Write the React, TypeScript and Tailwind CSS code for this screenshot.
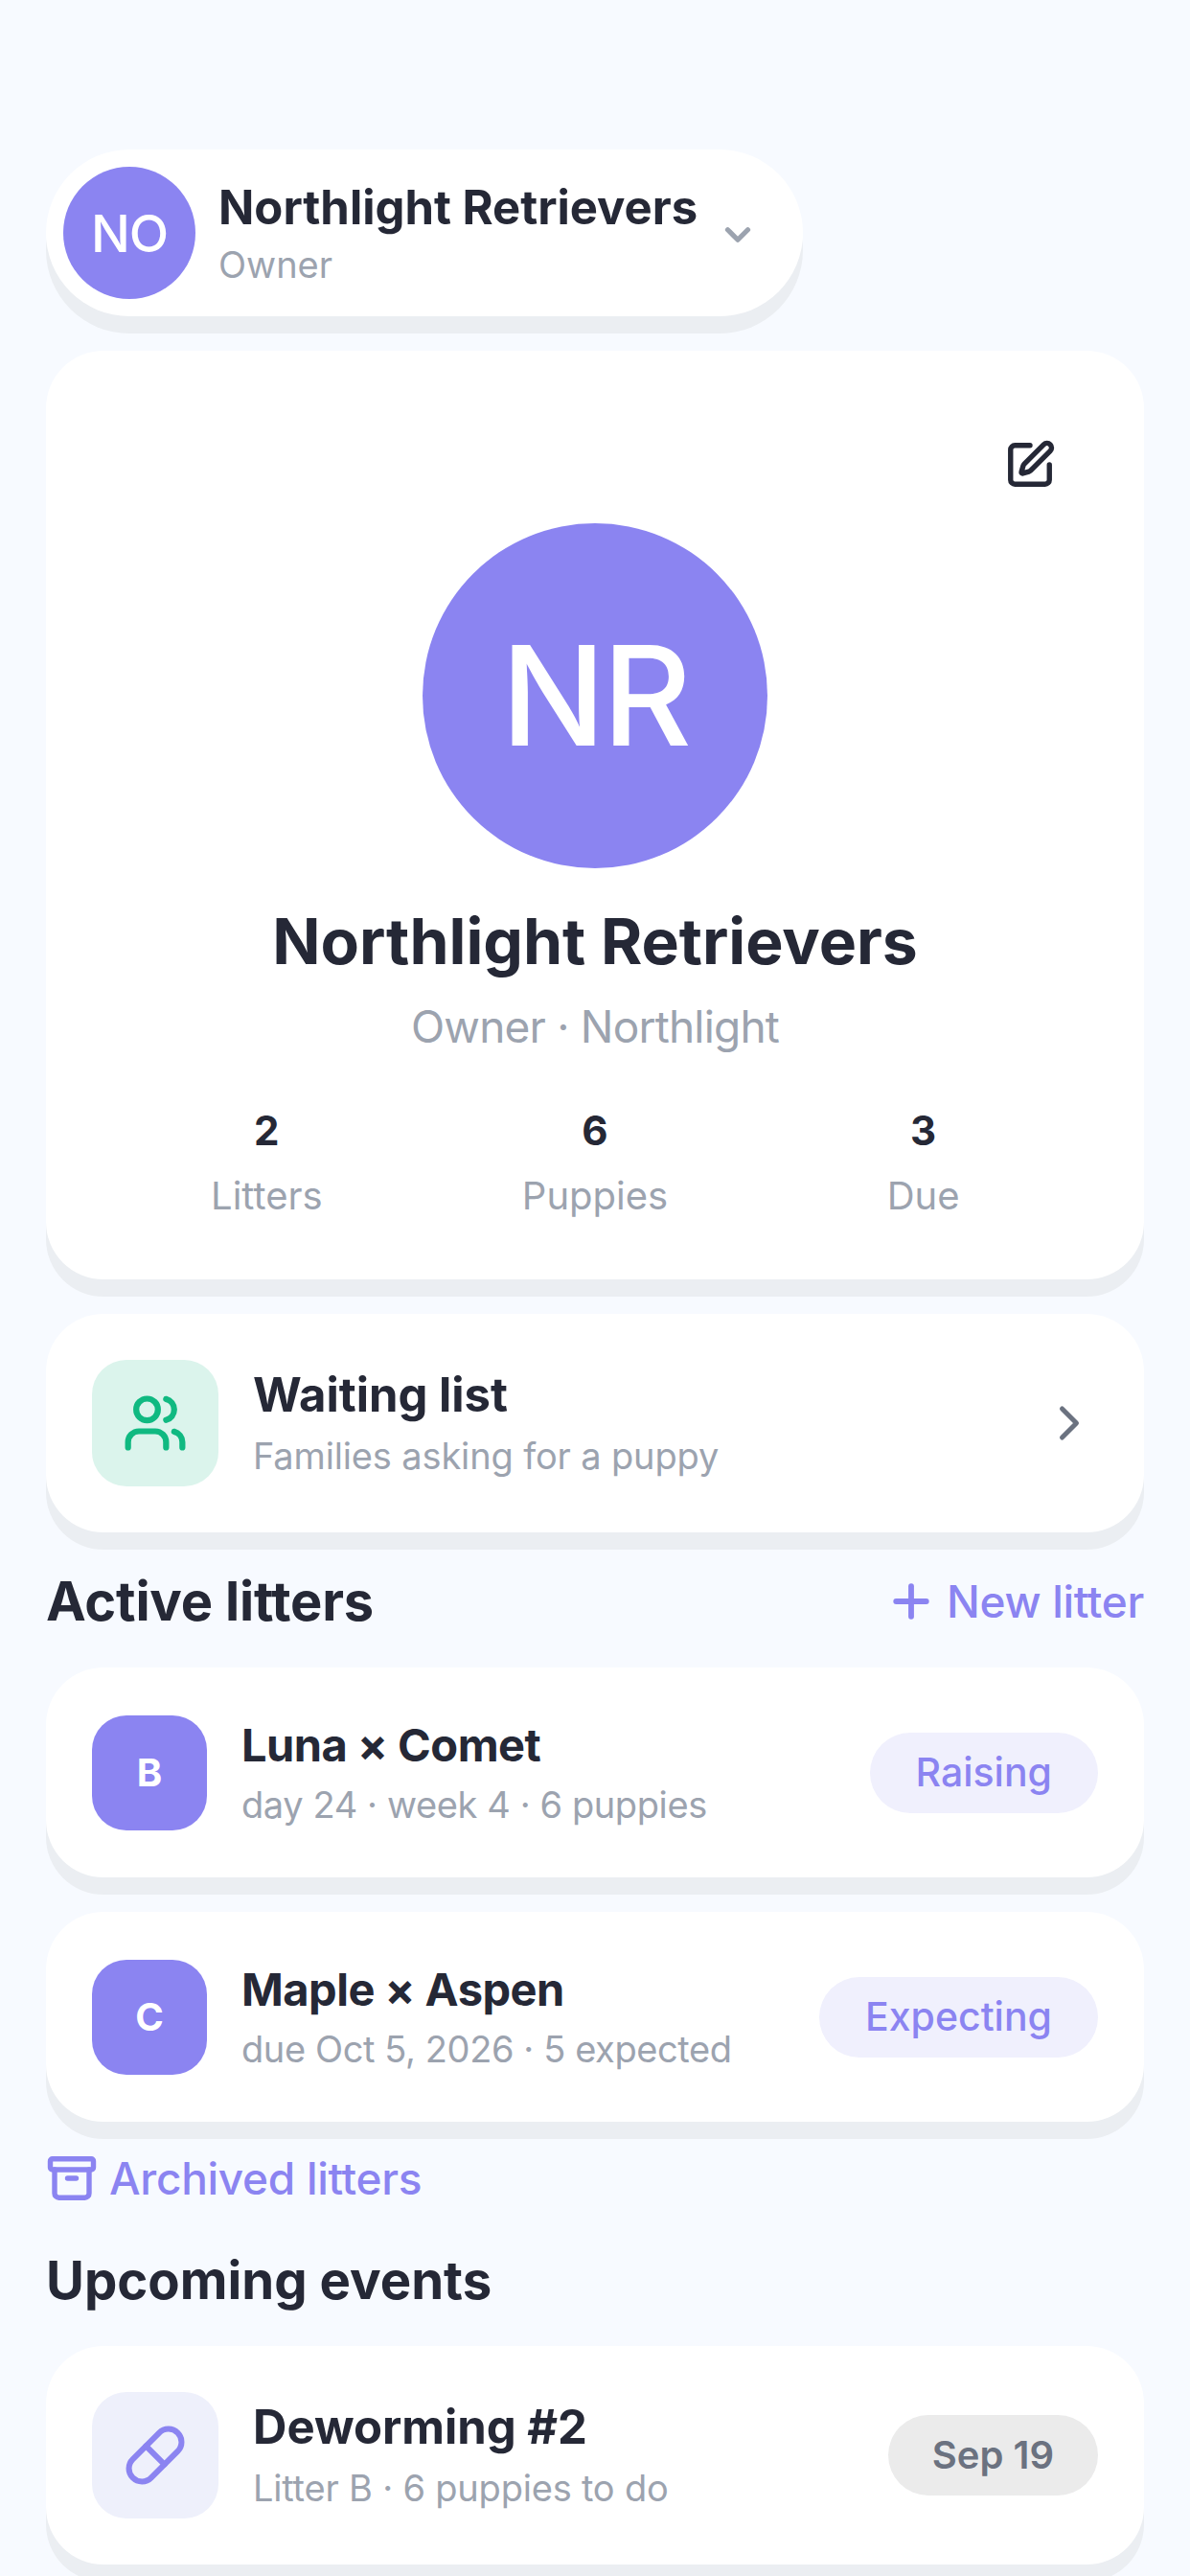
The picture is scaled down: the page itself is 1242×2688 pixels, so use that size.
import { Archive, ChevronDown, ChevronRight, Pill, Plus, SquarePen, Users } from 'lucide-react';

const STATS = [
  { value: '2', label: 'Litters' },
  { value: '6', label: 'Puppies' },
  { value: '3', label: 'Due' },
];

const LITTERS = [
  { letter: 'B', title: 'Luna × Comet', sub: 'day 24 · week 4 · 6 puppies', status: 'Raising' },
  { letter: 'C', title: 'Maple × Aspen', sub: 'due Oct 5, 2026 · 5 expected', status: 'Expecting' },
];

const cardClass = 'bg-white shadow-[0_18px_0_#ebeef2]';

export default function App() {
  return (
    <div className="h-[2688px] overflow-hidden bg-[#f7faff] px-[48px] pt-[156px] font-['Inter',sans-serif] text-[#252836]">
      {/* Kennel switcher */}
      <div className={`${cardClass} flex h-[174px] w-[790px] items-center rounded-full pl-[18px]`}>
        <div className="flex h-[138px] w-[138px] items-center justify-center rounded-full bg-[#8b84f1] text-[54px] font-medium tracking-[-1px] text-white">
          NO
        </div>
        <div className="ml-[24px] flex flex-col">
          <span className="w-[502px] text-[49px] leading-[60px] font-bold whitespace-nowrap">Northlight Retrievers</span>
          <span className="mt-[5px] text-[38px] leading-[48px] text-[#9ca3af]">Owner</span>
        </div>
        <ChevronDown className="ml-[19px] mt-[4px] text-[#9ca3af]" size={42} strokeWidth={3} />
      </div>

      {/* Profile */}
      <div className={`${cardClass} mt-[36px] flex h-[969px] flex-col items-center rounded-[60px] px-[48px]`}>
        <div className="flex w-full justify-end pt-[92px] pr-[44px]">
          <SquarePen size={54} strokeWidth={2.4} />
        </div>
        <div className="mt-[34px] flex h-[360px] w-[360px] items-center justify-center rounded-full bg-[#8b84f1] text-[144px] font-medium tracking-[-3px] text-white">
          NR
        </div>
        <div className="mt-[34px] text-[66px] leading-[84px] font-bold">Northlight Retrievers</div>
        <div className="mt-[17px] text-[46px] leading-[60px] tracking-[-0.8px] text-[#9ca3af]">Owner · Northlight</div>
        <div className="mt-[49px] grid w-full grid-cols-3 px-[11px]">
          {STATS.map((stat) => (
            <div key={stat.label} className="flex flex-col items-center">
              <span className="text-[42px] leading-[60px] font-bold">{stat.value}</span>
              <span className="mt-[8px] text-[40px] leading-[60px] text-[#9ca3af]">{stat.label}</span>
            </div>
          ))}
        </div>
      </div>

      {/* Waiting list */}
      <div className={`${cardClass} mt-[36px] flex h-[228px] items-center rounded-[60px] px-[48px]`}>
        <div className="flex h-[132px] w-[132px] items-center justify-center rounded-[36px] bg-[#dbf4ec] text-[#10b981]">
          <Users size={68} strokeWidth={2.2} />
        </div>
        <div className="ml-[36px] flex flex-1 flex-col">
          <span className="text-[49px] leading-[60px] font-bold">Waiting list</span>
          <span className="mt-[8px] text-[38px] leading-[50px] tracking-[-0.15px] text-[#9ca3af]">Families asking for a puppy</span>
        </div>
        <ChevronRight className="text-[#6b7280]" size={60} strokeWidth={2} />
      </div>

      {/* Active litters */}
      <div className="mt-[36px] flex h-[72px] items-center justify-between">
        <h2 className="text-[56px] font-bold tracking-[-0.2px]">Active litters</h2>
        <div className="flex items-center gap-[10px] text-[#8b84f1]">
          <Plus size={54} strokeWidth={2.6} />
          <span className="text-[46px] font-medium tracking-[-0.3px]">New litter</span>
        </div>
      </div>

      <div className="mt-[33px] flex flex-col gap-[36px]">
        {LITTERS.map((litter) => (
          <div key={litter.letter} className={`${cardClass} flex h-[219px] items-center rounded-[60px] px-[48px]`}>
            <div className="flex h-[120px] w-[120px] items-center justify-center rounded-[36px] bg-[#8b84f1] text-[40px] font-bold text-white">
              {litter.letter}
            </div>
            <div className="ml-[36px] flex flex-1 flex-col">
              <span className="text-[47px] leading-[60px] font-bold tracking-[-0.5px]">{litter.title}</span>
              <span className="mt-[7px] text-[38px] leading-[50px] tracking-[-0.4px] text-[#9ca3af]">{litter.sub}</span>
            </div>
            <span className="flex h-[84px] items-center rounded-full bg-[#f0f0fd] px-[48px] text-[41px] font-medium text-[#8b84f1]">
              {litter.status}
            </span>
          </div>
        ))}
      </div>

      {/* Archived */}
      <div className="mt-[35px] flex h-[48px] items-center gap-[12px] text-[#8b84f1]">
        <Archive size={54} strokeWidth={2.4} />
        <span className="text-[46px] font-medium tracking-[-0.3px]">Archived litters</span>
      </div>

      {/* Upcoming events */}
      <h2 className="mt-[46px] text-[54.5px] leading-[72px] font-bold">Upcoming events</h2>

      <div className={`${cardClass} mt-[33px] flex h-[228px] items-center rounded-[60px] px-[48px]`}>
        <div className="flex h-[132px] w-[132px] items-center justify-center rounded-[36px] bg-[#eef0fb] text-[#8b84f1]">
          <Pill size={66} strokeWidth={2.2} />
        </div>
        <div className="ml-[36px] flex flex-1 flex-col">
          <span className="text-[49px] leading-[60px] font-bold">Deworming #2</span>
          <span className="mt-[8px] text-[38px] leading-[50px] tracking-[-0.2px] text-[#9ca3af]">Litter B · 6 puppies to do</span>
        </div>
        <span className="flex h-[84px] items-center rounded-full bg-[#ebebeb] px-[46px] text-[40px] font-semibold text-[#6b7280]">
          Sep 19
        </span>
      </div>
    </div>
  );
}
